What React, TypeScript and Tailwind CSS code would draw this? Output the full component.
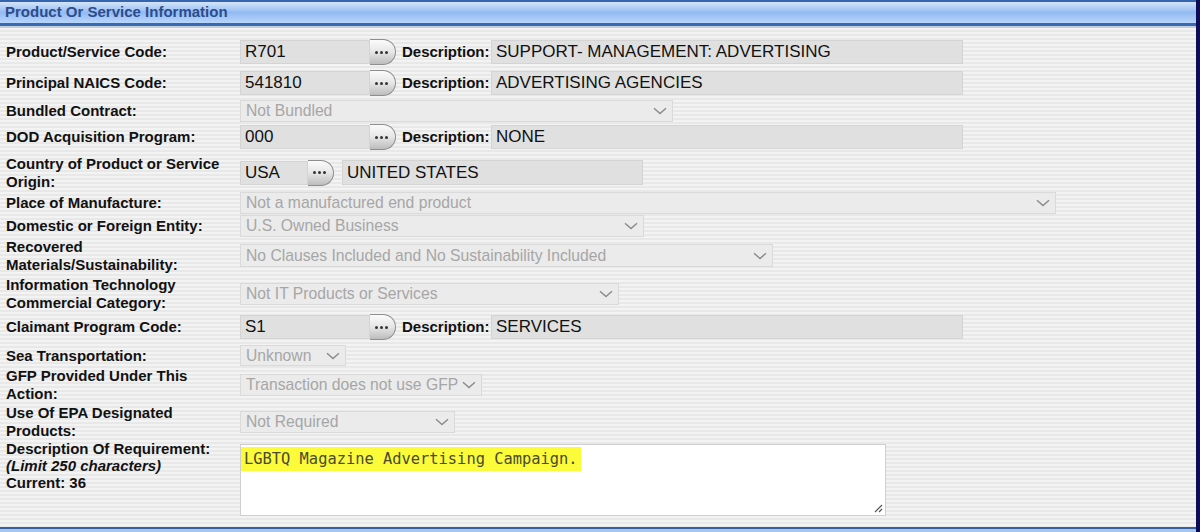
import React from "react";

type Row =
  | { kind: "code"; label: string[]; code: string; desc: string; mt: number }
  | { kind: "select"; label: string[]; value: string; w: number; h: number; mt: number }
  | { kind: "country"; label: string[]; mt: number };

const rows: Row[] = [
  { kind: "code", label: ["Product/Service Code:"], code: "R701", desc: "SUPPORT- MANAGEMENT: ADVERTISING", mt: 0 },
  { kind: "code", label: ["Principal NAICS Code:"], code: "541810", desc: "ADVERTISING AGENCIES", mt: 7 },
  { kind: "select", label: ["Bundled Contract:"], value: "Not Bundled", w: 433, h: 22, mt: 5 },
  { kind: "code", label: ["DOD Acquisition Program:"], code: "000", desc: "NONE", mt: 3 },
  { kind: "country", label: ["Country of Product or Service", "Origin:"], mt: 6 },
  { kind: "select", label: ["Place of Manufacture:"], value: "Not a manufactured end product", w: 816, h: 22, mt: 2 },
  { kind: "select", label: ["Domestic or Foreign Entity:"], value: "U.S. Owned Business", w: 404, h: 22, mt: 1 },
  { kind: "select", label: ["Recovered", "Materials/Sustainability:"], value: "No Clauses Included and No Sustainability Included", w: 533, h: 23, mt: 1 },
  { kind: "select", label: ["Information Technology", "Commercial Category:"], value: "Not IT Products or Services", w: 379, h: 22, mt: 3 },
  { kind: "code", label: ["Claimant Program Code:"], code: "S1", desc: "SERVICES", mt: 4 },
  { kind: "select", label: ["Sea Transportation:"], value: "Unknown", w: 106, h: 21, mt: 6 },
  { kind: "select", label: ["GFP Provided Under This", "Action:"], value: "Transaction does not use GFP", w: 242, h: 22, mt: 1 },
  { kind: "select", label: ["Use Of EPA Designated", "Products:"], value: "Not Required", w: 215, h: 22, mt: 2 },
];

function Label({ lines }: { lines: string[] }) {
  return (
    <div className="w-[234px] shrink-0 text-[15px] font-bold leading-[17.5px] text-[#111]">
      {lines.map((l) => (
        <div key={l}>{l}</div>
      ))}
    </div>
  );
}

function LookupButton() {
  return (
    <div className="-my-[1px] flex h-[26px] w-[26px] shrink-0 items-center justify-center gap-[2px] rounded-r-[13px] border border-l-0 border-[#8e8e8e] bg-gradient-to-b from-[#fbfbfb] via-[#e6e6e6] to-[#bdbdbd] pr-[3px]">
      <span className="h-[3px] w-[3px] rounded-full bg-[#333]" />
      <span className="h-[3px] w-[3px] rounded-full bg-[#333]" />
      <span className="h-[3px] w-[3px] rounded-full bg-[#333]" />
    </div>
  );
}

function TextBox({ value, w }: { value: string; w: number }) {
  return (
    <div
      className="flex h-[24px] shrink-0 items-center border border-[#d4d4d4] bg-[#e0e0e0] pl-[4px] text-[17px] text-[#111]"
      style={{ width: w }}
    >
      {value}
    </div>
  );
}

function Chevron() {
  return (
    <svg width="14" height="8" viewBox="0 0 14 8" className="shrink-0">
      <path d="M1 1.2 L7 6.6 L13 1.2" fill="none" stroke="#8a8a8a" strokeWidth="1.4" />
    </svg>
  );
}

function DisabledSelect({ value, w, h }: { value: string; w: number; h: number }) {
  return (
    <div
      className="flex shrink-0 items-center justify-between gap-[2px] border border-[#dadada] bg-[#ebebeb] pl-[5px] pr-[5px] text-[15.7px] text-[#a6a6a6]"
      style={{ width: w, height: h }}
    >
      <span className="whitespace-nowrap">{value}</span>
      <Chevron />
    </div>
  );
}

export default function App() {
  return (
    <div className="flex h-[532px] w-[1200px] flex-col overflow-hidden border-r-[4px] border-[#0c0c58] bg-white font-['Liberation_Sans',Arial,sans-serif]">
      {/* Header */}
      <div className="shrink-0">
        <div className="h-[2px] bg-[#3564b0]" />
        <div className="flex h-[21px] items-center bg-gradient-to-b from-[#d3e4fb] via-[#93bbf1] to-[#b8d5fb] pl-[5px] text-[15px] font-bold text-[#2c4c8c]">
          Product Or Service Information
        </div>
        <div className="h-[3px] bg-[#3a69b4]" />
        <div className="h-[2px] bg-[#c4cedb]" />
      </div>

      {/* Body */}
      <div className="flex-1 bg-[repeating-linear-gradient(to_bottom,#f3f3f3_0px,#f3f3f3_2px,#e8e8e8_2px,#e8e8e8_4px)] pl-[6px] pt-[12px]">
        {rows.map((r, i) => (
          <div key={i} className="flex items-center" style={{ marginTop: r.mt }}>
            <Label lines={r.label} />
            {r.kind === "code" && (
              <div className="flex items-center">
                <TextBox value={r.code} w={130} />
                <LookupButton />
                <span className="ml-[6px] w-[89px] text-[15px] font-bold text-[#111]">Description:</span>
                <div className="flex h-[24px] w-[472px] items-center border border-[#d4d4d4] bg-[#e0e0e0] pl-[4px] text-[17px] text-[#111]">
                  {r.desc}
                </div>
              </div>
            )}
            {r.kind === "country" && (
              <div className="flex items-center">
                <TextBox value="USA" w={68} />
                <LookupButton />
                <div className="ml-[8px] flex h-[25px] w-[301px] items-center border border-[#d4d4d4] bg-[#e0e0e0] pl-[4px] text-[17px] text-[#111]">
                  UNITED STATES
                </div>
              </div>
            )}
            {r.kind === "select" && <DisabledSelect value={r.value} w={r.w} h={r.h} />}
          </div>
        ))}

        {/* Description of requirement */}
        <div className="mt-[5px] flex items-start">
          <div className="-mt-[4px] w-[234px] shrink-0 text-[15px] font-bold leading-[17px] text-[#111]">
            <div>Description Of Requirement:</div>
            <div className="italic">(Limit 250 characters)</div>
            <div>Current: 36</div>
          </div>
          <div className="relative h-[72px] w-[646px] border border-[#cfcfcf] border-b-[#e2c9c9] bg-white pt-[2px]">
            <span className="inline-block bg-[#fbfb3a] py-[3px] pl-[3px] pr-[3px] font-['DejaVu_Sans_Mono',monospace] text-[15.4px] leading-[18px] text-[#4a4a30]">
              LGBTQ Magazine Advertising Campaign.
            </span>
            <svg width="10" height="10" viewBox="0 0 10 10" className="absolute bottom-[2px] right-[2px]">
              <path d="M2 9 L9 2 M6 9 L9 6" stroke="#555" strokeWidth="1.2" />
            </svg>
          </div>
        </div>
      </div>

      {/* Footer */}
      <div className="shrink-0">
        <div className="h-[2px] bg-[#37609c]" />
        <div className="h-[3px] bg-[#a6c6ee]" />
      </div>
    </div>
  );
}
